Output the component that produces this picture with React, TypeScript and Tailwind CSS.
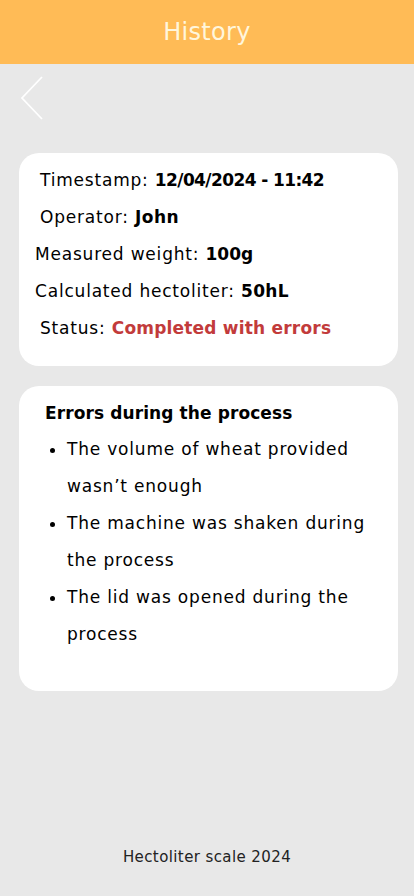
export default function App() {
  const font = { fontFamily: '"DejaVu Sans", "Noto Sans", sans-serif' };
  return (
    <div className="min-h-[896px] w-[414px] bg-[#e8e8e8] flex flex-col" style={font}>
      <div className="h-16 bg-[#ffbb56] flex items-center justify-center">
        <span className="text-[24px] text-[#fff6dc] tracking-[0.3px]">History</span>
      </div>
      <div className="pl-5 pt-3 h-[89px]">
        <svg width="24" height="44" viewBox="0 0 24 44" fill="none">
          <path d="M22 1 L2 22 L22 43" stroke="white" strokeWidth="1.8" />
        </svg>
      </div>
      <div className="ml-[19px] mr-[16px] bg-white rounded-[20px] pt-[9px] pb-[19px] text-[17px] text-black tracking-[0.8px]">
        <div className="h-[37px] flex items-center pl-[21px]">Timestamp:&nbsp;<b className="tracking-[-0.6px]">12/04/2024 - 11:42</b></div>
        <div className="h-[37px] flex items-center pl-[21px]">Operator:&nbsp;<b className="tracking-[0.5px]">John</b></div>
        <div className="h-[37px] flex items-center pl-[16px]">Measured weight:&nbsp;<b className="tracking-[0px]">100g</b></div>
        <div className="h-[37px] flex items-center pl-[16px]">Calculated hectoliter:&nbsp;<b className="tracking-[0.3px]">50hL</b></div>
        <div className="h-[37px] flex items-center pl-[21px]">Status:&nbsp;<b className="text-[#c23b3b] tracking-[0.2px]">Completed with errors</b></div>
      </div>
      <div className="ml-[19px] mr-[16px] mt-[20px] bg-white rounded-[20px] pt-[15px] h-[305px] text-[17px] text-black">
        <div className="pl-[26px] font-bold h-[26px] flex items-center tracking-[0.1px]">Errors during the process</div>
        <ul className="pl-[48px] pr-[16px] list-disc leading-[37px] mt-[4px] tracking-[0.8px]">
          <li>The volume of wheat provided wasn’t enough</li>
          <li>The machine was shaken during the process</li>
          <li>The lid was opened during the process</li>
        </ul>
      </div>
      <div className="flex-1" />
      <div className="text-center text-[15px] text-[#222] pb-[28px] tracking-[0.4px]">Hectoliter scale 2024</div>
    </div>
  );
}
